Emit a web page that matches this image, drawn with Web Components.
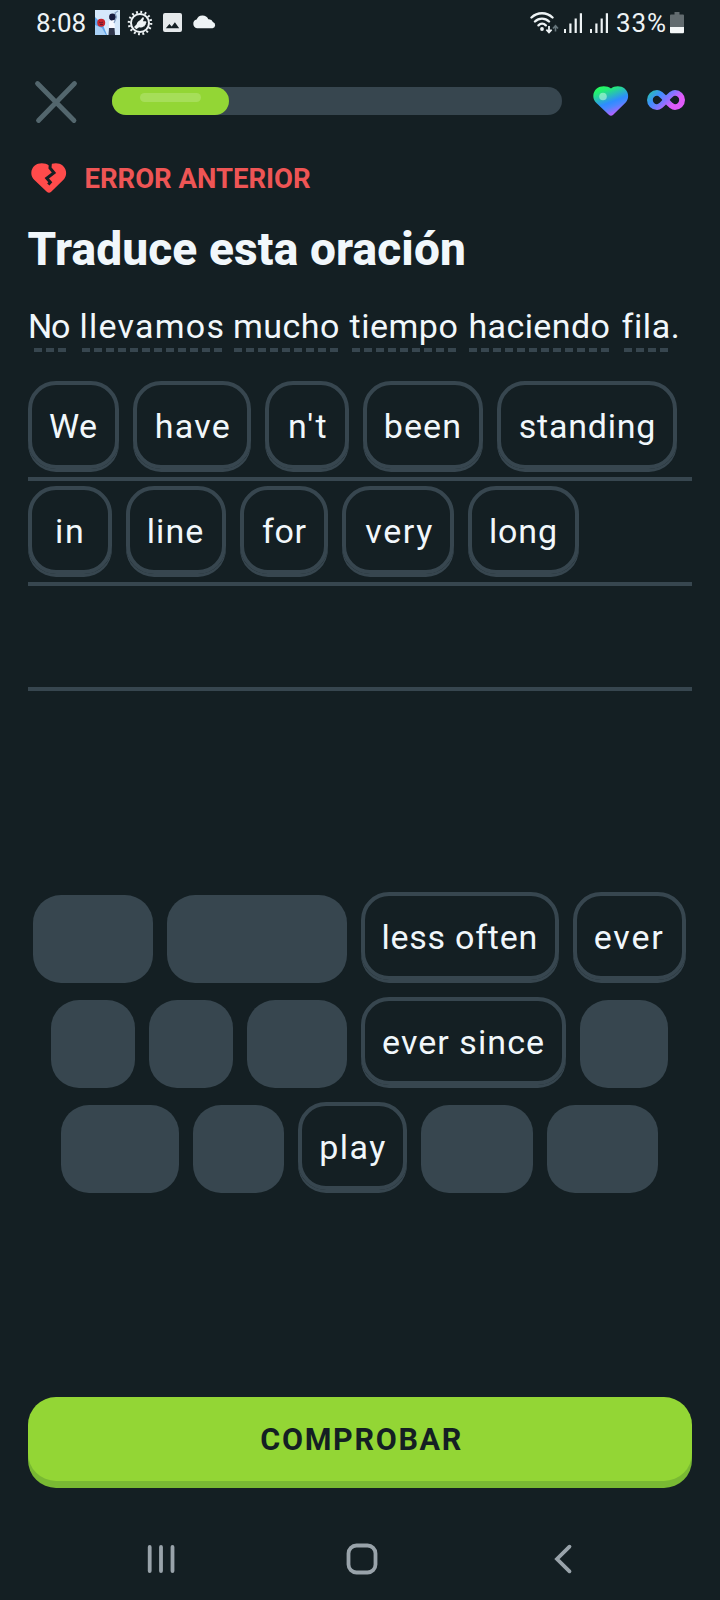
<!DOCTYPE html>
<html lang="es">
<head>
<meta charset="utf-8">
<title>Traduce esta oración</title>
<style>
html,body{margin:0;background:#141f23}
body{width:720px;height:1600px;overflow:hidden;font-family:Roboto,"Open Sans",sans-serif;color:#f1f7fb}
</style>
</head>
<body>
<lesson-screen></lesson-screen>
<script>
const define = (name, html, ready) => {
  const template = document.createElement('template');
  template.innerHTML = html;
  customElements.define(name, class extends HTMLElement {
    constructor() {
      super();
      this.attachShadow({mode: 'open'}).append(template.content.cloneNode(true));
    }
    connectedCallback() { if (ready) ready(this, this.shadowRoot); }
  });
};

/* Text tracked so that its visible ink spans exactly the given width. */
define('tracked-text', `<style>:host{display:block;white-space:nowrap;flex:none}span{display:block}</style><span><slot></slot></span>`, (el, root) => {
  const w = +el.getAttribute('w'), text = el.textContent, cs = getComputedStyle(el);
  const ctx = document.createElement('canvas').getContext('2d');
  ctx.font = cs.fontWeight + ' ' + cs.fontSize + ' ' + cs.fontFamily;
  const m = ctx.measureText(text);
  const ink = m.actualBoundingBoxLeft + m.actualBoundingBoxRight;
  el.style.width = w + 'px';
  const span = root.querySelector('span');
  span.style.letterSpacing = ((w - ink) / (text.length - 1)).toFixed(3) + 'px';
  span.style.marginLeft = m.actualBoundingBoxLeft.toFixed(2) + 'px';
});

define('status-bar', `
<style>
:host{display:flex;height:45px;padding-left:37px;color:#eef3f5;font-size:26px;line-height:45px}
svg{display:block;flex:none}
tracked-text{padding-top:1px}
</style>
<tracked-text w="48.500">8:08</tracked-text>
<svg width="25" height="25" viewBox="0 0 25 25" style="margin:10px 0 0 9.500px">
  <path fill="#d5e8fb" d="M0 0h25v25H0z"/><path fill="#5ea3ea" d="M0 7l8 8 4 10H0z"/><path fill="#a9d0f6" d="M0 15l7 3 4 7H0z"/>
  <circle cx="6.2" cy="12.7" r="4" fill="#c8252d"/><path stroke="#651d31" stroke-width="1" fill="none" d="M4 12l2 1 2-1M5 14.500h3"/>
  <circle cx="17.500" cy="7" r="3.400" fill="#171b3e"/><path fill="#171b3e" d="M14.500 8l5 1-2 4z"/><path fill="#f8f9ff" d="M14 11l5-1 1 8-6 1z"/>
  <path d="M19 13l2.500-6-1.500-4 3-2" fill="none" stroke="#8aa3c6" stroke-width="1.300"/><path fill="#30364b" d="M14 18h5.500l.5 7h-6.500z"/>
</svg>
<svg width="26" height="26" viewBox="-13 -13 26 26" style="margin:9.500px 0 0 7px">
  <circle r="11" fill="none" stroke="#eef3f5" stroke-width="2.600" stroke-dasharray="1.840 2.480"/>
  <circle r="9" fill="none" stroke="#eef3f5" stroke-width="2"/>
  <path fill="#eef3f5" d="M-6 4l2.700-2.700C-3-.6-1.900-1.800.1-2.700L2.700-5.700c1.300-.2 1.500.9.900 2.200L2.900-1.700H5.500c1.200.3 1.200 1.500.3 2 .4.900-.2 1.700-.9 1.800 0 1.100-.6 1.500-1.400 1.500C2.500 4.500.9 4.800-.9 4.200L-3.700 6.300z"/>
</svg>
<svg width="19" height="19" viewBox="0 0 19 19" style="margin:13px 0 0 10px">
  <path fill="#e5e9eb" fill-rule="evenodd" d="M2 0h15a2 2 0 0 1 2 2v15a2 2 0 0 1-2 2H2a2 2 0 0 1-2-2V2a2 2 0 0 1 2-2zm.8 15.300h13.400l-4.300-6-3.200 4.200-2.300-2.400z"/>
</svg>
<svg width="24" height="14" viewBox="0 0 24 14" style="margin:15px 0 0 10px">
  <path fill="#eef3f5" d="M5 13.200a4.400 4.400 0 0 1-.4-8.600A6.300 6.300 0 0 1 16.300 4.200a4.300 4.300 0 0 1 4.600 2.800 3.200 3.200 0 0 1-.3 6.200z"/>
</svg>
<svg width="30" height="24" viewBox="0 0 30 24" style="margin:10.500px 0 0 313.500px">
  <g fill="none" stroke="#eef3f5" stroke-width="2.400" stroke-linecap="round"><path d="M1.500 6.500a15.200 15.200 0 0 1 21 0M5 10.500a10 10 0 0 1 14 0M8.500 14.300a5.200 5.200 0 0 1 7.300 0"/></g>
  <circle cx="12" cy="18" r="1.900" fill="#eef3f5"/>
  <path d="M19 15v6M16.400 18.700l2.600 2.800 2.600-2.800" fill="none" stroke="#eef3f5" stroke-width="1.800"/>
  <path d="M25.500 20.500v-5M23 17.500l2.500-2.800 2.500 2.800" fill="none" stroke="#66757b" stroke-width="1.600"/>
</svg>
<svg width="19" height="21" viewBox="0 0 19 21" style="margin:13px 0 0 4.500px"><path fill="#eef3f5" d="M0 16h2v4H0zM5.300 10.500h2.200V20H5.300zM10.600 5.500h2.200V20h-2.200zM15.800.2H18V20h-2.200z"/></svg>
<svg width="19" height="21" viewBox="0 0 19 21" style="margin:13px 0 0 7px"><path fill="#eef3f5" d="M0 16h2v4H0zM5.300 10.500h2.200V20H5.300zM10.600 5.500h2.200V20h-2.200zM15.800.2H18V20h-2.200z"/></svg>
<tracked-text w="48" style="margin-left:8px">33%</tracked-text>
<svg width="14" height="22" viewBox="0 0 14 22" style="margin:12px 0 0 4.500px"><path fill="#626b6f" d="M4.500 0h5v2.500H13q1 0 1 1V15H0V3.500q0-1 1-1h3.500z"/><path fill="#f4f7f8" d="M0 15h14v5q0 1.300-1 1.300H1q-1 0-1-1z"/></svg>
`);

define('lesson-header', `
<style>
:host{display:flex;height:58px;margin:27px 0 0 34px}
svg{display:block;flex:none}
.track{width:450px;height:28px;border-radius:14px;background:#37464f;margin:15px 0 0 34px}
.fill{width:117px;height:28px;border-radius:14px;background:#93d635;display:flex}
.shine{width:61px;height:9px;border-radius:4.500px;background:#a6de59;margin:5.500px 0 0 28px}
</style>
<svg width="44" height="44" viewBox="0 0 44 44" style="margin-top:8px"><path d="M3.500 3.500L40 40.500M40.500 3.500L4.500 40.500" stroke="#53666d" stroke-width="4.800" stroke-linecap="round"/></svg>
<div class="track"><div class="fill"><div class="shine"></div></div></div>
<svg width="36" height="31" viewBox="0 0 36 31" style="margin:14px 0 0 30.500px">
  <defs><linearGradient id="h" x1=".15" y1="0" x2=".6" y2="1"><stop offset="0" stop-color="#25ff55"/><stop offset=".2" stop-color="#24e87c"/><stop offset=".58" stop-color="#2e8cff"/><stop offset=".72" stop-color="#4c87ff"/><stop offset="1" stop-color="#cb59ff"/></linearGradient></defs>
  <path fill="url(#h)" d="M18 2.500C21.200-.3 28-.7 31.600 2.600 36.200 6.500 36.200 13 32.200 17L20.200 28.800q-2.200 2-4.400 0L3.400 17C-.8 13-.8 6.500 3.800 2.600 7.600-.7 14.400-.3 18 2.500z"/>
  <circle cx="10" cy="10.500" r="3.800" fill="#b9fbd8" opacity=".6"/>
</svg>
<svg width="38" height="22" viewBox="0 0 38 22" style="margin:17px 0 0 18.500px">
  <defs><linearGradient id="i" x1="0" y1="0" x2="1" y2=".45"><stop offset="0" stop-color="#2bb9bd"/><stop offset=".3" stop-color="#3f8dff"/><stop offset=".6" stop-color="#8474ff"/><stop offset=".9" stop-color="#e05bfa"/></linearGradient></defs>
  <path fill="none" stroke="url(#i)" stroke-width="5.800" d="M19 11C15.500 6.500 13 3.900 10 3.900a7.100 7.100 0 0 0 0 14.200C13 18.100 15.500 15.500 19 11S25 3.900 28 3.900a7.100 7.100 0 0 1 0 14.200C25 18.100 22.500 15.500 19 11z"/>
</svg>
`);

define('mistake-badge', `
<style>
:host{display:flex;height:40px;margin:28px 0 0 31px;color:#ee5555;font-size:27.500px;font-weight:700;line-height:42px}
svg{display:block;margin:5px 18.500px 0 0}
</style>
<svg width="36" height="31" viewBox="0 0 36 31"><path fill="#ff4b4b" d="M18 2.500C21.200-.3 28-.7 31.600 2.600 36.200 6.500 36.200 13 32.200 17L20.200 28.800q-2.200 2-4.400 0L3.400 17C-.8 13-.8 6.500 3.800 2.600 7.600-.7 14.400-.3 18 2.500z"/><path d="M19.500-1L19 5 23 9.800 15.800 15.300 19.300 19.200 17.300 21.500" fill="none" stroke="#141f23" stroke-width="3"/></svg><slot></slot>`);

define('hint-word', `
<style>
:host{display:block;flex:none;height:46px}
i{display:block;height:4px;margin-top:1px;background:repeating-linear-gradient(90deg,#37464f 0 8px,transparent 8px 12px)}
</style>
<slot></slot><i></i>`, (el, root) => {
  const [gap, shift, width] = el.getAttribute('geo').split(' ');
  el.style.marginLeft = gap + 'px';
  const line = root.querySelector('i');
  line.style.marginLeft = shift + 'px';
  line.style.width = width + 'px';
});

define('word-tile', `
<style>
:host{display:block;flex:none;box-sizing:border-box;height:88px;margin-bottom:3px;border:4px solid #37464f;border-radius:28px;box-shadow:0 3px #37464f}
div{display:flex;justify-content:center;padding:1px 1px 0 0;line-height:80px}
</style>
<div><slot></slot></div>`, el => { el.style.width = el.getAttribute('w') + 'px'; });

define('tile-slot', `
<style>:host{display:block;flex:none;height:88px;margin-top:3px;border-radius:28px;background:#37464f}</style>`,
  el => { el.style.width = el.getAttribute('w') + 'px'; });

define('answer-line', `
<style>:host{display:flex;gap:14px;box-sizing:border-box;width:664px;height:105px;margin-left:28px;padding-top:5px;border-bottom:4px solid #37464f}</style>
<slot></slot>`);

define('bank-row', `
<style>:host{display:flex;justify-content:center;gap:14px;height:105px;padding-right:1px}</style>
<slot></slot>`);

define('check-button', `
<style>
:host{display:flex;justify-content:center;box-sizing:border-box;width:664px;height:84px;margin:190px 0 0 28px;padding-left:2px;border-radius:28px;background:#93d635;box-shadow:0 7px #79b933;color:#141f23;font-size:30.500px;font-weight:700;line-height:84px}
tracked-text{padding-top:1px}
</style>
<tracked-text w="199.500">COMPROBAR</tracked-text>`);

define('nav-bar', `
<style>:host{display:flex;align-items:center;height:30px;margin:63px 0 0 147px}svg{display:block}</style>
<svg width="29" height="30" viewBox="0 0 29 30"><path d="M2.700 3v24M14 3v24M25.500 3v24" stroke="#99a3aa" stroke-width="3.800" stroke-linecap="round"/></svg>
<svg width="32" height="32" viewBox="0 0 32 32" style="margin-left:170px"><rect x="2.500" y="2.500" width="27" height="27" rx="8" fill="none" stroke="#99a3aa" stroke-width="3.800"/></svg>
<svg width="20" height="30" viewBox="0 0 20 30" style="margin-left:175px"><path d="M16.500 2.700L4 15l12.500 12.300" fill="none" stroke="#99a3aa" stroke-width="3.800" stroke-linecap="round"/></svg>
`);

define('lesson-screen', `
<style>
:host{display:block;width:720px;height:1600px;background:#141f23;font-size:34px}
h1{margin:21px 0 0 27.500px;font-size:46px;font-weight:800;line-height:60px}
.sentence{display:flex;height:60px;margin:27px 0 0 30px;line-height:41px}
.answer{margin-top:10px}
.bank{margin-top:201px}
.nudge{margin-left:2.500px}
</style>
<status-bar></status-bar>
<lesson-header></lesson-header>
<mistake-badge><tracked-text w="224.500">ERROR ANTERIOR</tracked-text></mistake-badge>
<h1><tracked-text w="436.500">Traduce esta oración</tracked-text></h1>
<div class="sentence">
  <hint-word geo="0 4 32"><tracked-text w="39">No</tracked-text></hint-word>
  <hint-word geo="12.500 .5 140"><tracked-text w="141">llevamos</tracked-text></hint-word>
  <hint-word geo="12.500 -1 104"><tracked-text w="103">mucho</tracked-text></hint-word>
  <hint-word geo="11.500 2.500 104"><tracked-text w="107">tiempo</tracked-text></hint-word>
  <hint-word geo="14 -1.500 140"><tracked-text w="138">haciendo</tracked-text></hint-word>
  <hint-word geo="12.500 2 44"><tracked-text w="55">fila.</tracked-text></hint-word>
</div>
<div class="answer">
<answer-line>
  <word-tile w="91"><tracked-text w="46">We</tracked-text></word-tile>
  <word-tile w="118"><tracked-text class="nudge" w="72">have</tracked-text></word-tile>
  <word-tile w="84"><tracked-text class="nudge" w="35.500">n't</tracked-text></word-tile>
  <word-tile w="120"><tracked-text w="73.500">been</tracked-text></word-tile>
  <word-tile w="180"><tracked-text w="133.500">standing</tracked-text></word-tile>
</answer-line>
<answer-line>
  <word-tile w="84"><tracked-text w="25">in</tracked-text></word-tile>
  <word-tile w="100"><tracked-text w="53.500">line</tracked-text></word-tile>
  <word-tile w="88"><tracked-text class="nudge" w="43.500">for</tracked-text></word-tile>
  <word-tile w="112"><tracked-text class="nudge" w="67">very</tracked-text></word-tile>
  <word-tile w="111"><tracked-text w="64">long</tracked-text></word-tile>
</answer-line>
<answer-line></answer-line>
</div>
<div class="bank">
<bank-row>
  <tile-slot w="120"></tile-slot><tile-slot w="180"></tile-slot>
  <word-tile w="198"><tracked-text w="152">less often</tracked-text></word-tile>
  <word-tile w="113"><tracked-text w="68.500">ever</tracked-text></word-tile>
</bank-row>
<bank-row>
  <tile-slot w="84"></tile-slot><tile-slot w="84"></tile-slot><tile-slot w="100"></tile-slot>
  <word-tile w="205"><tracked-text w="160">ever since</tracked-text></word-tile>
  <tile-slot w="88"></tile-slot>
</bank-row>
<bank-row>
  <tile-slot w="118"></tile-slot><tile-slot w="91"></tile-slot>
  <word-tile w="109"><tracked-text class="nudge" w="64">play</tracked-text></word-tile>
  <tile-slot w="112"></tile-slot><tile-slot w="111"></tile-slot>
</bank-row>
</div>
<check-button></check-button>
<nav-bar></nav-bar>
`);
</script>
</body>
</html>
